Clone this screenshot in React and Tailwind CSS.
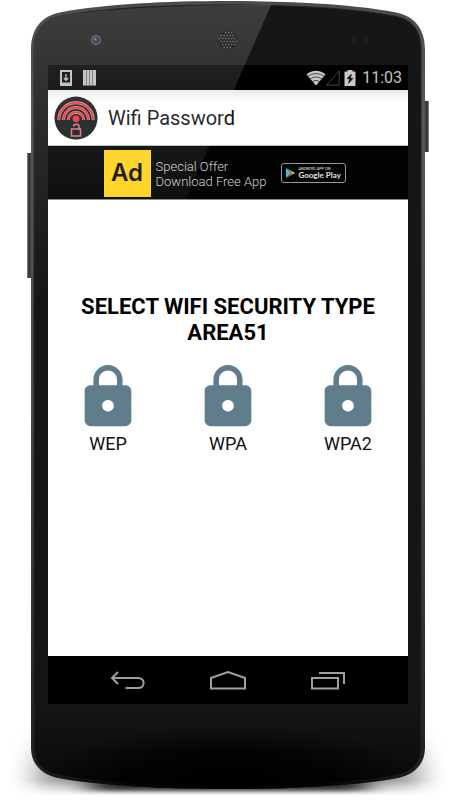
import React from "react";

const NETWORK_TYPES = ["WEP", "WPA", "WPA2"];

const SPEAKER_ROWS = [2, 5, 8, 11, 14, 17];

// phone body, side keys and the shadow it stands on
const PhoneBody = () => (
  <svg
    className="absolute inset-0 h-full w-full"
    viewBox="0 0 456 800"
    preserveAspectRatio="none"
    aria-hidden="true"
  >
    <defs>
      <linearGradient id="rim" x1="0" y1="0" x2="0" y2="1">
        <stop offset="0" stopColor="#4a4c4b" />
        <stop offset="0.15" stopColor="#58585b" />
        <stop offset="0.6" stopColor="#454547" />
        <stop offset="1" stopColor="#1c1c1c" />
      </linearGradient>
      <linearGradient id="face" x1="0" y1="0" x2="0" y2="1">
        <stop offset="0" stopColor="#161616" />
        <stop offset="0.9" stopColor="#151515" />
        <stop offset="1" stopColor="#090909" />
      </linearGradient>
      <radialGradient id="chin">
        <stop offset="0" stopColor="#000" />
        <stop offset="0.5" stopColor="#000" stopOpacity="0.8" />
        <stop offset="1" stopColor="#000" stopOpacity="0" />
      </radialGradient>
      <filter id="soft" x="-20%" y="-50%" width="140%" height="200%">
        <feGaussianBlur stdDeviation="14 2" />
      </filter>
      <filter id="wide" x="-30%" y="-150%" width="160%" height="400%">
        <feGaussianBlur stdDeviation="14 16" />
      </filter>
      <linearGradient id="fade" x1="0" y1="0" x2="0" y2="1">
        <stop offset="0" stopColor="#fff" />
        <stop offset="0.85" stopColor="#fff" />
        <stop offset="1" stopColor="#000" />
      </linearGradient>
      <mask id="floor" maskUnits="userSpaceOnUse" x="0" y="690" width="456" height="110">
        <rect x="0" y="690" width="456" height="106" fill="url(#fade)" />
      </mask>
      <clipPath id="body">
        <path d="M31 50C31 25 45 15 62 12C105 4 165 1 228 1S351 4 394 12C411 15 425 25 425 50V748C425 765 413 775 398 778C355 786 290 789 228 789S101 786 58 778C43 775 31 765 31 748Z" />
      </clipPath>
    </defs>
    <g mask="url(#floor)">
      <rect x="36" y="754" width="384" height="44" fill="#000" opacity="0.45" filter="url(#wide)" />
    </g>
    <rect x="90" y="772" width="276" height="19" fill="#000" opacity="0.75" filter="url(#soft)" />
    <rect x="27" y="153" width="5" height="125" rx="1" fill="#3c3c3d" />
    <rect x="27" y="153" width="1" height="125" fill="#777" />
    <rect x="424" y="101" width="5" height="51" rx="1" fill="#3c3c3d" />
    <rect x="428" y="102" width="1" height="49" fill="#777" />
    <g clipPath="url(#body)">
      <rect width="456" height="800" fill="url(#rim)" />
      <path
        d="M34 50C34 28 46 19 62 16C105 8 165 5 228 5S351 8 394 16C410 19 421 28 421 50V748C421 763 411 772 398 775C355 783 290 787 228 787S101 783 58 775C43 772 34 763 34 748Z"
        fill="url(#face)"
        stroke="#222"
        strokeWidth="1"
      />
      <ellipse cx="228" cy="783" rx="200" ry="58" fill="url(#chin)" />
    </g>
  </svg>
);

// diagonal reflection, lies over the bezel and the dark bars
const Glare = () => (
  <svg
    className="pointer-events-none absolute inset-0 h-full w-full"
    viewBox="0 0 456 800"
    preserveAspectRatio="none"
    aria-hidden="true"
  >
    <defs>
      <linearGradient id="glare" x1="0" y1="0" x2="0" y2="1">
        <stop offset="0" stopColor="#fff" stopOpacity="0.17" />
        <stop offset="0.3" stopColor="#fff" stopOpacity="0.11" />
        <stop offset="0.6" stopColor="#fff" stopOpacity="0.06" />
        <stop offset="1" stopColor="#fff" stopOpacity="0" />
      </linearGradient>
    </defs>
    <path
      d="M34 50C34 28 46 19 62 16C110 8 180 5 271 5L142 300H34Z"
      fill="url(#glare)"
    />
  </svg>
);

const TopBezel = () => (
  <div className="grid h-[65px] grid-cols-3 items-center pb-4 pt-[30px]">
    <svg className="ml-[42px] h-3 w-3" viewBox="0 0 12 12" aria-hidden="true">
      <circle cx="6" cy="6" r="5" fill="#55555a" />
      <circle cx="6" cy="6" r="3.6" fill="#24242e" />
      <circle cx="5.6" cy="5.6" r="2" fill="#3a3a86" />
      <circle cx="5" cy="5" r="0.8" fill="#9d9dd0" />
    </svg>
    <svg className="mx-auto h-5 w-5" viewBox="0 0 20 20" aria-hidden="true">
      <circle cx="10" cy="10" r="9.5" fill="#050505" />
      {SPEAKER_ROWS.map((y, row) =>
        SPEAKER_ROWS.map((x, col) => {
          const cx = x + (row % 2) * 1.5 - 0.3;
          if (Math.hypot(cx - 10, y + 0.5 - 10) > 8.5) return null;
          return (
            <circle key={`${row}-${col}`} cx={cx} cy={y + 0.5} r="0.9" fill="#555" />
          );
        })
      )}
    </svg>
    <svg className="ml-auto mr-9 h-2 w-6" viewBox="0 0 24 8" aria-hidden="true">
      <circle cx="6" cy="4" r="3.5" fill="#201e1f" />
      <circle cx="19" cy="4" r="2.5" fill="#201e1f" />
    </svg>
  </div>
);

const StatusBar = () => (
  <div className="flex h-[25px] items-center justify-between bg-black pl-3 pr-[6px]">
    <div className="flex items-center gap-[11px]">
      <svg className="h-4 w-3" viewBox="0 0 12 16" aria-hidden="true">
        <path
          fillRule="evenodd"
          d="M0 0H12V16H0ZM2 2V12.500H10V2Z"
          fill="#bdbdbd"
        />
        <path d="M6 4V10M3.800 8L6 10.300L8.200 8" fill="none" stroke="#bdbdbd" strokeWidth="1.3" />
      </svg>
      <svg className="h-4 w-[13px]" viewBox="0 0 13 16" aria-hidden="true">
        <path d="M0 0H13V15.500H0Z" fill="#bdbdbd" />
        <path d="M3.500 0V16M6.500 0V16M9.500 0V16" stroke="#555" strokeWidth="0.7" />
      </svg>
    </div>
    <div className="flex items-center">
      <svg className="h-4 w-5" viewBox="0 0 20 16" aria-hidden="true">
        <path d="M0.500 4.500C6 -0.500 14 -0.500 19.500 4.500L10 15.500Z" fill="#c8c8c8" />
        <path
          d="M1.500 6.800C6.500 2.600 13.500 2.600 18.500 6.800M3.800 9.400C7.500 6.200 12.500 6.200 16.200 9.400M6.200 12C8.500 10 11.500 10 13.800 12"
          fill="none"
          stroke="#222"
          strokeWidth="0.8"
        />
      </svg>
      <svg className="mr-1 h-4 w-[14px]" viewBox="0 0 14 16" aria-hidden="true">
        <path d="M0.500 15.200L13.200 1V15.200Z" fill="none" stroke="#444" strokeWidth="1" />
      </svg>
      <svg className="mr-[6px] h-4 w-3" viewBox="0 0 12 16" aria-hidden="true">
        <path d="M3.500 0H8.500V1.500H11.500V16H0.500V1.500H3.500Z" fill="#c8c8c8" />
        <path d="M7.500 4L3 8.500L5.500 9L4.500 13.500L9 8.500L6.500 8Z" fill="#111" stroke="#111" strokeWidth="0.5" />
      </svg>
      <span className="text-base leading-6 text-[#c4c4c4]">11:03</span>
    </div>
  </div>
);

const AppLogo = () => (
  <svg className="h-11 w-11" viewBox="0 0 44 44" aria-hidden="true">
    <circle cx="22" cy="22.500" r="21.500" fill="#aaa" opacity="0.6" />
    <circle cx="22" cy="22" r="21.500" fill="#171b1b" />
    <g fill="none" stroke="#d9a5a5" strokeWidth="2.900">
      <path d="M4.800 24A17.200 17.200 0 0 1 39.200 24" />
      <path d="M9.500 24A12.500 12.500 0 0 1 34.500 24" />
      <path d="M14.200 24A7.800 7.800 0 0 1 29.800 24" />
    </g>
    <g fill="none" stroke="#ee2e36" strokeWidth="1.800">
      <path d="M4.800 24A17.200 17.200 0 0 1 39.200 24" />
      <path d="M9.500 24A12.500 12.500 0 0 1 34.500 24" />
      <path d="M14.200 24A7.800 7.800 0 0 1 29.800 24" />
    </g>
    <circle cx="22" cy="22.800" r="3.400" fill="#f0353c" />
    <path
      d="M17.500 33H26.500V40H17.500ZM19.500 30.500C19.500 27.500 25 27.500 25 30.500V33"
      fill="none"
      stroke="#e0777b"
      strokeWidth="1.500"
    />
  </svg>
);

const AdBanner = () => (
  <a
    href="#offer"
    className="flex h-[54px] items-center justify-center border-b border-[#888] bg-[#020303] pr-[6px] pt-px"
  >
    <span className="flex h-[47px] w-[47px] items-center justify-center bg-[#ffd21f] font-['Inter',sans-serif] text-2xl font-semibold text-[#111]">
      Ad
    </span>
    <span className="ml-[5px] whitespace-nowrap pt-0.5 text-[13px] font-light leading-[15px] text-[#d0d0d0]">
      Special Offer
      <br />
      Download Free App
    </span>
    <span className="ml-[15px] flex h-5 w-[65px] items-center gap-[3px] rounded-[3px] border border-[#999] pl-1">
      <svg className="h-[10px] w-[9px] shrink-0" viewBox="0 0 9 10" aria-hidden="true">
        <path d="M0 0L5 5L0 10Z" fill="#43bfc7" />
        <path d="M0 0L6.500 3.500L5 5Z" fill="#5fc08b" />
        <path d="M0 10L6.500 6.500L5 5Z" fill="#e0525a" />
        <path d="M6.500 3.500L9 5L6.500 6.500L5 5Z" fill="#f3c746" />
      </svg>
      <span className="flex flex-col whitespace-nowrap text-[#e6e6e6]">
        <span className="text-[4px] leading-[5px]">ANDROID APP ON</span>
        <span className="font-['Lato',sans-serif] text-[8px] font-bold leading-[9px]">
          Google Play
        </span>
      </span>
    </span>
  </a>
);

const LockIcon = () => (
  <svg className="h-[70px] w-[70px]" viewBox="0 0 24 24" fill="#607d8b" aria-hidden="true">
    <path d="M18 8h-1V6c0-2.760-2.240-5-5-5S7 3.240 7 6v2H6c-1.100 0-2 .9-2 2v10c0 1.100.9 2 2 2h12c1.100 0 2-.9 2-2V10c0-1.100-.9-2-2-2zm-6 9c-1.100 0-2-.9-2-2s.9-2 2-2 2 .9 2 2-.9 2-2 2zm3.100-9H8.900V6c0-1.710 1.390-3.100 3.100-3.100s3.100 1.390 3.100 3.100v2z" />
  </svg>
);

const NavBar = () => (
  <nav className="flex h-12 items-center justify-center gap-16 bg-black pt-0.5">
    <button type="button" aria-label="Back">
      <svg className="h-5 w-9" viewBox="0 0 36 20" fill="none" stroke="#a0a0a0" strokeWidth="2">
        <path d="M2 7H28C35.500 7 35.500 17 28 17H15.500M8 1L2 7L8 13" />
      </svg>
    </button>
    <button type="button" aria-label="Home">
      <svg className="h-5 w-9" viewBox="0 0 36 20" fill="none" stroke="#a0a0a0" strokeWidth="2">
        <path d="M1 17.500V7L18 1L35 7V17.500Z" />
      </svg>
    </button>
    <button type="button" aria-label="Recent apps">
      <svg className="h-5 w-9" viewBox="0 0 36 20" fill="none" stroke="#a0a0a0" strokeWidth="2">
        <path d="M2 7H28V17.500H2ZM9 2H34V13" />
      </svg>
    </button>
  </nav>
);

export default function App() {
  return (
    <div className="relative flex min-h-screen flex-col bg-white font-['Roboto',sans-serif]">
      <PhoneBody />
      <div className="relative flex flex-1 flex-col px-12">
        <TopBezel />
        <StatusBar />
        <header className="flex h-14 items-center gap-[10px] border-b border-[#bbb] bg-linear-to-b from-[#e8e8e8] to-white to-20% pl-[6px]">
          <AppLogo />
          <h1 className="text-xl text-[#111]">Wifi Password</h1>
        </header>
        <AdBanner />
        <main className="flex-1 bg-white pt-[94px]">
          <h2 className="text-center text-[22px] font-bold leading-[26px] text-black">
            SELECT WIFI SECURITY TYPE
            <br />
            AREA51
          </h2>
          <div className="mt-4 grid grid-cols-3">
            {NETWORK_TYPES.map((type) => (
              <button
                key={type}
                type="button"
                className="flex flex-col items-center text-lg leading-6 text-[#111]"
              >
                <LockIcon />
                {type}
              </button>
            ))}
          </div>
        </main>
        <NavBar />
        <div className="h-24" />
      </div>
      <Glare />
    </div>
  );
}
